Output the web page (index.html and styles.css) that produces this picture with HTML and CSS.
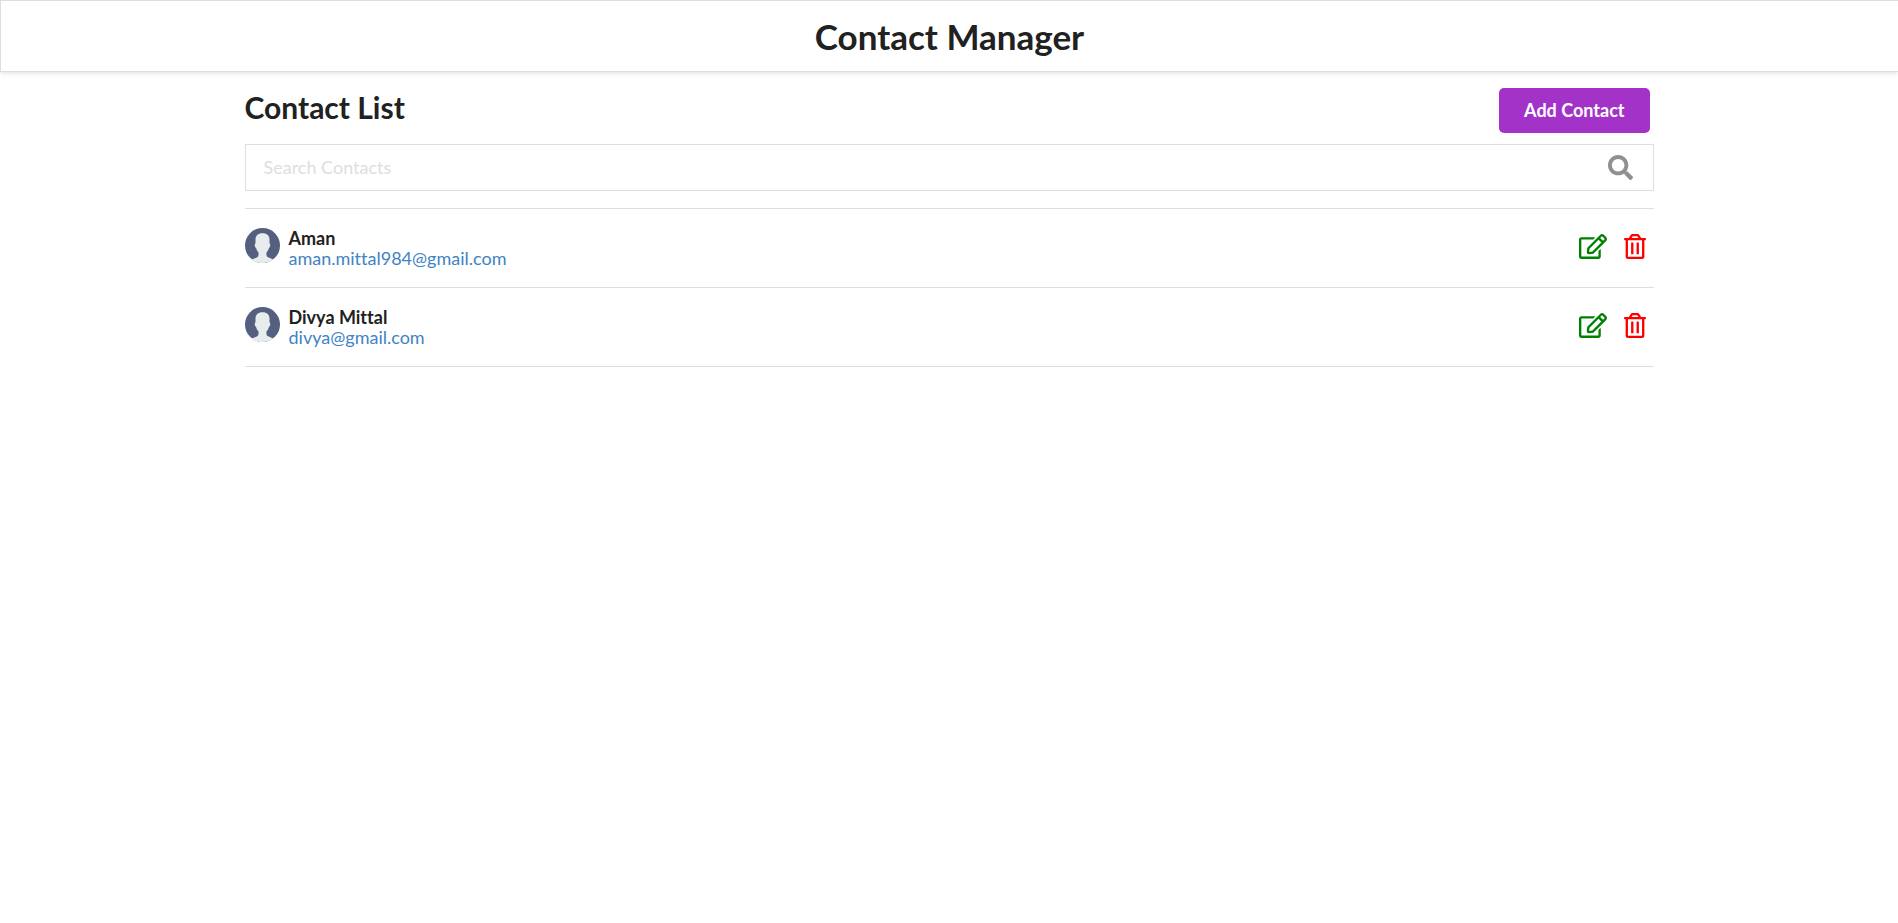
FILE: index.html
```html
<!DOCTYPE html>
<html lang="en">
<head>
<meta charset="utf-8">
<meta name="viewport" content="width=device-width, initial-scale=1">
<title>Contact Manager</title>
<link rel="stylesheet" href="styles.css">
</head>
<body>
<svg class="sprite" aria-hidden="true">
  <symbol id="icon-search" viewBox="0 0 512 512"><path d="M505 442.7L405.3 343c-4.5-4.5-10.6-7-17-7H372c27.6-35.3 44-79.7 44-128C416 93.1 322.9 0 208 0S0 93.1 0 208s93.1 208 208 208c48.3 0 92.7-16.4 128-44v16.3c0 6.4 2.5 12.5 7 17l99.7 99.7c9.4 9.4 24.6 9.4 33.9 0l28.3-28.3c9.4-9.4 9.4-24.6.1-34zM208 336c-70.7 0-128-57.2-128-128 0-70.7 57.2-128 128-128 70.8 0 128 57.2 128 128 0 70.7-57.2 128-128 128z"/></symbol>
  <symbol id="icon-edit" viewBox="0 0 576 512"><path d="M402.3 344.9l32-32c5-5 13.7-1.5 13.7 5.7V464c0 26.5-21.5 48-48 48H48c-26.5 0-48-21.5-48-48V112c0-26.5 21.5-48 48-48h273.5c7.1 0 10.7 8.6 5.7 13.7l-32 32c-1.5 1.5-3.5 2.3-5.7 2.3H48v352h352V350.5c0-2.1.8-4.1 2.3-5.6zm156.6-201.8L296.3 405.7l-90.4 10c-26.2 2.9-48.5-19.2-45.6-45.6l10-90.4L432.9 17.1c22.9-22.9 59.9-22.9 82.7 0l43.2 43.2c22.9 22.9 22.9 60 .1 82.8zM460.1 174L402 115.9 216.2 301.8l-7.3 65.3 65.3-7.3L460.1 174zm64.8-79.7l-43.2-43.2c-4.1-4.1-10.8-4.1-14.8 0L436 82l58.1 58.1 30.9-30.9c4-4.2 4-10.8-.1-14.9z"/></symbol>
  <symbol id="icon-trash" viewBox="0 0 448 512"><path d="M268 416h24a12 12 0 0 0 12-12V188a12 12 0 0 0-12-12h-24a12 12 0 0 0-12 12v216a12 12 0 0 0 12 12zM432 80h-82.41l-34-56.7A48 48 0 0 0 274.41 0H173.59a48 48 0 0 0-41.16 23.3L98.41 80H16A16 16 0 0 0 0 96v16a16 16 0 0 0 16 16h16v336a48 48 0 0 0 48 48h288a48 48 0 0 0 48-48V128h16a16 16 0 0 0 16-16V96a16 16 0 0 0-16-16zM171.84 50.91A6 6 0 0 1 177 48h94a6 6 0 0 1 5.15 2.91L293.61 80H154.39zM368 464H80V128h288zm-212-48h24a12 12 0 0 0 12-12V188a12 12 0 0 0-12-12h-24a12 12 0 0 0-12 12v216a12 12 0 0 0 12 12z"/></symbol>
  <symbol id="icon-user" viewBox="0 0 60 60">
    <circle cx="30" cy="30" r="30" fill="#556080"/>
    <path fill="#e7eced" d="M30 9c-8 0-12 4.500-12 11v6c-1 .6-1.300 1.500-1.300 3 0 2.500.8 4.300 2.300 5.200.8 3 2.200 5.500 4.200 7.300v4.500c0 2-1 3.500-3 4.600L11 54.500C16 58 23 60 30 60s14-2 19-5.500l-9.200-4.200c-2-1-3-2.500-3-4.500v-4.300c2-1.800 3.400-4.300 4.200-7.300 1.500-.9 2.300-2.700 2.300-5.200 0-1.500-.3-2.400-1.300-3v-6C42 13.500 38 9 30 9z"/>
  </symbol>
</svg>

<header class="topbar">
  <h1 class="topbar-title">Contact Manager</h1>
</header>

<main class="container">
  <div class="heading">
    <h2 class="heading-title">Contact List</h2>
    <button class="button" type="button">Add Contact</button>
  </div>

  <div class="search" role="search">
    <input class="search-input" type="text" placeholder="Search Contacts" aria-label="Search Contacts">
    <svg class="search-icon" aria-hidden="true"><use href="#icon-search"/></svg>
  </div>

  <ul class="contacts">
    <li class="contact">
      <svg class="avatar" aria-hidden="true"><use href="#icon-user"/></svg>
      <div class="details">
        <div class="name">Aman</div>
        <a class="email" href="#aman">aman.mittal984@gmail.com</a>
      </div>
      <div class="actions">
        <button class="action edit" type="button" aria-label="Edit Aman"><svg class="icon-wide" aria-hidden="true"><use href="#icon-edit"/></svg></button>
        <button class="action trash" type="button" aria-label="Delete Aman"><svg class="icon-slim" aria-hidden="true"><use href="#icon-trash"/></svg></button>
      </div>
    </li>
    <li class="contact">
      <svg class="avatar" aria-hidden="true"><use href="#icon-user"/></svg>
      <div class="details">
        <div class="name">Divya Mittal</div>
        <a class="email" href="#divya">divya@gmail.com</a>
      </div>
      <div class="actions">
        <button class="action edit" type="button" aria-label="Edit Divya Mittal"><svg class="icon-wide" aria-hidden="true"><use href="#icon-edit"/></svg></button>
        <button class="action trash" type="button" aria-label="Delete Divya Mittal"><svg class="icon-slim" aria-hidden="true"><use href="#icon-trash"/></svg></button>
      </div>
    </li>
  </ul>
</main>
</body>
</html>
```
FILE: styles.css
```css
* {
  box-sizing: border-box;
}

body {
  margin: 0;
  background: #fff;
  color: #212121;
  font-family: Lato, "Liberation Sans", sans-serif;
  font-size: 18px;
  line-height: 20px;
  font-variant-ligatures: none;
}

.sprite {
  display: none;
}

.topbar {
  padding: 13px 16px;
  border: 1px solid #dededf;
  border-right: 0;
  box-shadow: 0 1px 5px #dededf;
  text-align: center;
}

.topbar-title {
  margin: 0;
  font-size: 35px;
  line-height: 44px;
}

.container {
  max-width: 1409px;
  margin: 0 auto;
  padding-top: 16px;
}

.heading {
  display: flex;
  justify-content: space-between;
  align-items: flex-start;
  padding-right: 4px;
  margin-bottom: 11px;
}

.heading-title {
  margin: 0;
  font-size: 30px;
  line-height: 39px;
}

.button {
  padding: 12px 25px;
  border: 0;
  border-radius: 5px;
  background: #a333c8;
  color: #fff;
  font: bold 18px/21px Lato, "Liberation Sans", sans-serif;
}

.search {
  display: flex;
  align-items: center;
  padding-right: 20px;
  border: 1px solid #dededf;
}

.search-input {
  flex: 1;
  min-width: 0;
  padding: 12px 18px;
  border: 0;
  outline: 0;
  background: none;
  color: #212121;
  font: 18px/21px Lato, "Liberation Sans", sans-serif;
}

.search-input::placeholder {
  color: #dedede;
  opacity: 1;
}

.search-icon {
  width: 25px;
  height: 25px;
  fill: #909090;
}

.contacts {
  margin: 17px 0 0;
  padding: 0;
  border-top: 1px solid #dededf;
  list-style: none;
}

.contact {
  display: flex;
  align-items: flex-start;
  padding: 19px 8px 19px 0;
  border-bottom: 1px solid #dededf;
}

.avatar {
  width: 35px;
  height: 35px;
  margin-right: 9px;
}

.details {
  flex: 1;
}

.name {
  font-weight: bold;
}

.email {
  color: #4183c4;
  text-decoration: none;
}

.actions {
  display: flex;
  gap: 17px;
  padding-top: 6px;
}

.action {
  display: flex;
  padding: 0;
  border: 0;
  background: none;
}

.edit {
  fill: green;
}

.trash {
  fill: red;
}

.icon-wide {
  width: 28px;
  height: 25px;
}

.icon-slim {
  width: 22px;
  height: 25px;
}
```
